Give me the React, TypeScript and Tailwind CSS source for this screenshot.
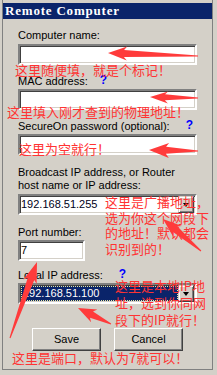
import React from "react";

type Arrow = { tx: number; ty: number; ex: number; ey: number; L: number; W: number; w0: number; w1: number };

// tip (tx,ty) -> tail end (ex,ey), brush style: wide near head, thin at the end
const arrowPoints = (a: Arrow) => {
  const dx = a.ex - a.tx;
  const dy = a.ey - a.ty;
  const len = Math.sqrt(dx * dx + dy * dy);
  const ux = dx / len;
  const uy = dy / len;
  const nx = -uy;
  const ny = ux;
  const bx = a.tx + ux * a.L;
  const by = a.ty + uy * a.L;
  const sx = a.tx + ux * (a.L + 3);
  const sy = a.ty + uy * (a.L + 3);
  const pts = [
    [a.tx, a.ty],
    [sx + nx * a.W, sy + ny * a.W],
    [bx + nx * a.w0, by + ny * a.w0],
    [a.ex + nx * a.w1, a.ey + ny * a.w1],
    [a.ex - nx * a.w1, a.ey - ny * a.w1],
    [bx - nx * a.w0, by - ny * a.w0],
    [sx - nx * a.W, sy - ny * a.W],
  ];
  return pts.map((p) => `${p[0].toFixed(1)},${p[1].toFixed(1)}`).join(" ");
};

const arrows: Arrow[] = [
  { tx: 108, ty: 53, ex: 198, ey: 56, L: 16, W: 7, w0: 3.5, w1: 0.5 },
  { tx: 150, ty: 97, ex: 198, ey: 98, L: 15, W: 6, w0: 3, w1: 0.5 },
  { tx: 149, ty: 150, ex: 198, ey: 151, L: 17, W: 7.5, w0: 3.5, w1: 0.5 },
  { tx: 163, ty: 219, ex: 201, ey: 251, L: 16, W: 7, w0: 3.5, w1: 0.5 },
  { tx: 37, ty: 262, ex: 10, ey: 338, L: 18, W: 7, w0: 3.5, w1: 0.5 },
  { tx: 78, ty: 308, ex: 111, ey: 324, L: 15, W: 7, w0: 3.5, w1: 0.5 },
];

const field =
  "h-[21px] bg-white border-2 border-t-[#808080] border-l-[#808080] border-b-white border-r-white shadow-[inset_1px_1px_0_#404040,inset_-1px_-1px_0_#d4d0c8] flex items-center";

const label = "text-[11px] leading-[13px] text-black";

const DropButton = () => (
  <div className="ml-auto w-[16px] h-[17px] bg-[#d4d0c8] border border-t-[#d4d0c8] border-l-[#d4d0c8] border-b-[#404040] border-r-[#404040] shadow-[inset_1px_1px_0_#fff,inset_-1px_-1px_0_#808080] flex items-center justify-center">
    <div className="w-0 h-0 border-l-[3.5px] border-r-[3.5px] border-t-[4px] border-l-transparent border-r-transparent border-t-black" />
  </div>
);

const Help = () => <span className="text-[#0000ff] font-bold text-[12px]">?</span>;

export default function App() {
  return (
    <div className="relative w-[217px] h-[375px] bg-[#d4d0c8] overflow-hidden font-['Liberation_Sans',Arial,sans-serif]">
      <div className="ml-[2px] mr-[4px] h-[370px] pt-[3px] border-l border-r border-b border-[#808080]">
        {/* Title */}
        <div className="h-[16px] bg-[#0a246a] text-white font-bold font-['Liberation_Serif',serif] text-[13px] leading-[16px] tracking-[0.8px] pl-[2px]">
          Remote Computer
        </div>

        <div className="pl-[15px]">
          <div className={`${label} mt-[10px]`}>Computer name:</div>
          <div className={`${field} w-[179px] mt-[2px]`} />

          <div className={`${label} mt-[10px] flex`}>
            <span>MAC address:</span>
            <span className="ml-[12px] -mt-[1px]">
              <Help />
            </span>
          </div>
          <div className={`${field} w-[179px] mt-[1px]`} />

          <div className={`${label} mt-[10px] flex`}>
            <span>SecureOn password (optional):</span>
            <span className="ml-[16px] -mt-[1px]">
              <Help />
            </span>
          </div>
          <div className={`${field} w-[179px] mt-[1px]`} />

          <div className={`${label} mt-[11px]`}>
            Broadcast IP address, or Router
            <br />
            host name or IP address:
          </div>
          <div className={`${field} w-[179px] mt-[2px] pr-[1px]`}>
            <span className="pl-[1px] text-[11px] text-[#000020]">192.168.51.255</span>
            <DropButton />
          </div>

          <div className={`${label} mt-[11px]`}>Port number:</div>
          <div className={`${field} w-[67px] mt-[1px]`}>
            <span className="pl-[1px] text-[11px] text-black">7</span>
          </div>

          <div className={`${label} mt-[8px] flex`}>
            <span>Local IP address:</span>
            <span className="ml-[16px] -mt-[1px]">
              <Help />
            </span>
          </div>
          <div className={`${field} w-[179px] mt-[1px] pr-[1px]`}>
            <div className="ml-[1px] w-[159px] h-[15px] bg-[#0a246a] outline-1 outline-dotted outline-[#e8e8a0] -outline-offset-1 flex items-center">
              <span className="pl-[2px] text-[11px] text-white">192.168.51.100</span>
            </div>
            <DropButton />
          </div>

          <div className="mt-[24px] flex">
            <button className="ml-[14px] w-[69px] h-[23px] bg-[#d4d0c8] border border-t-white border-l-white border-b-[#404040] border-r-[#404040] shadow-[inset_-1px_-1px_0_#808080] text-[11px] text-black">
              Save
            </button>
            <button className="ml-[13px] w-[69px] h-[23px] bg-[#d4d0c8] border border-t-white border-l-white border-b-[#404040] border-r-[#404040] shadow-[inset_-1px_-1px_0_#808080] text-[11px] text-black">
              Cancel
            </button>
          </div>
        </div>
      </div>

      {/* red annotations */}
      <div className="absolute inset-0 pointer-events-none font-['Noto_Sans_CJK_SC',sans-serif] text-[#ff3333] text-[13px] leading-[16px]">
        <div className="absolute left-[15px] top-[62px] whitespace-nowrap">这里随便填，就是个标记！</div>
        <div className="absolute left-[7px] top-[104px] whitespace-nowrap">这里填入刚才查到的物理地址！</div>
        <div className="absolute left-[19px] top-[141px] whitespace-nowrap">这里为空就行！</div>
        <div className="absolute left-[105px] top-[194px] leading-[15.5px] whitespace-nowrap">
          这里是广播地址，
          <br />
          选为你这个网段下
          <br />
          的地址！默认都会
          <br />
          识别到的！
        </div>
        <div className="absolute left-[115px] top-[277px] leading-[17px] whitespace-nowrap">
          这里是本地IP地
          <br />
          址，选到你同网
          <br />
          段下的IP就行！
        </div>
        <div className="absolute left-[12px] top-[350px] whitespace-nowrap">这里是端口，默认为7就可以！</div>
        <svg className="absolute inset-0" width="217" height="375" viewBox="0 0 217 375">
          {arrows.map((a, i) => (
            <polygon key={i} points={arrowPoints(a)} fill="#ff3b3b" />
          ))}
        </svg>
      </div>
    </div>
  );
}
